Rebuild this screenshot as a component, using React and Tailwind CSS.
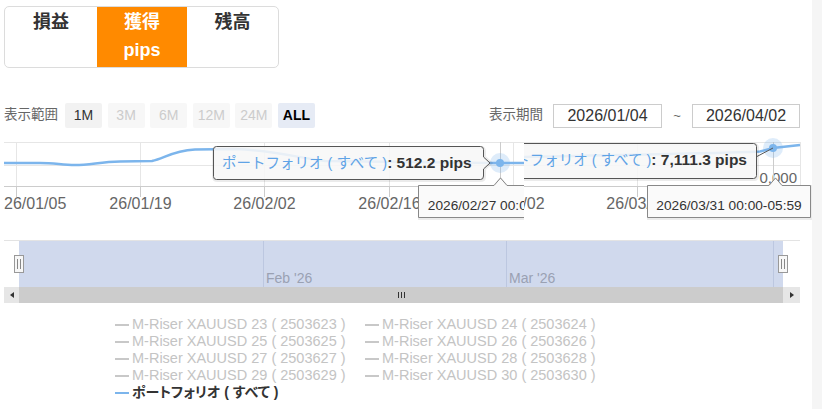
import React from "react";

const BLUE = "#7cb5ec";

function MainChart() {
  const labels = [
    { x: 4, t: "26/01/05", a: "start" },
    { x: 140.5, t: "26/01/19", a: "middle" },
    { x: 264.5, t: "26/02/02", a: "middle" },
    { x: 389.5, t: "26/02/16", a: "middle" },
    { x: 513.5, t: "26/03/02", a: "middle" },
    { x: 637.5, t: "26/03/16", a: "middle" },
  ];
  const vgrid = [16.5, 140.5, 264.5, 389.5, 513.5, 637.5];
  return (
    <svg width="812" height="94" viewBox="0 128 812 94" className="block">
      <defs>
        <clipPath id="clipL">
          <rect x="0" y="128" width="524" height="94" />
        </clipPath>
        <clipPath id="clipR">
          <rect x="524" y="128" width="288" height="94" />
        </clipPath>
      </defs>
      <line x1="4" y1="142.5" x2="800" y2="142.5" stroke="#e6e6e6" />
      <line x1="4" y1="165.5" x2="800" y2="165.5" stroke="#e6e6e6" />
      {vgrid.map((x) => (
        <g key={x}>
          <line x1={x} y1="142" x2={x} y2="186" stroke="#e6e6e6" />
          <line x1={x} y1="186" x2={x} y2="197" stroke="#ccc" />
        </g>
      ))}
      <line x1="800.5" y1="142" x2="800.5" y2="186" stroke="#e6e6e6" />
      <line x1="4" y1="186.5" x2="800" y2="186.5" stroke="#ccc" />
      {labels.map((l) => (
        <text key={l.t} x={l.x} y="208.5" textAnchor={l.a} fontSize="16" fill="#666">
          {l.t}
        </text>
      ))}
      <text x="797" y="183" textAnchor="end" fontSize="15" fill="#666">
        0,000
      </text>

      <g clipPath="url(#clipL)">
        <path
          d="M4,163 L40,163 C55,163 62,165 75,165 C90,165 100,162 120,161.5 L152,161 C165,158 172,151 195,149.5 L235,149 C270,150 300,158 325,161 L490,163 L524,163"
          fill="none"
          stroke={BLUE}
          strokeWidth="2.5"
        />
        <line x1="500.5" y1="142" x2="500.5" y2="178" stroke="#ccc" />
        <circle cx="500" cy="163" r="10" fill={BLUE} fillOpacity="0.25" />
        <circle cx="500" cy="163" r="4" fill={BLUE} />
        <path
          d="M217.5,147.5 H480.5 Q484.5,147.5 484.5,151.5 V157 L491,163 L484.5,169 V176.5 Q484.5,180.5 480.5,180.5 H217.5 Q213.5,180.5 213.5,176.5 V151.5 Q213.5,147.5 217.5,147.5 Z"
          fill="none"
          stroke="rgba(0,0,0,0.08)"
          strokeWidth="3"
        />
        <path
          d="M216.5,146.5 H480.5 Q483.5,146.5 483.5,149.5 V157 L490,163 L483.5,169 V176 Q483.5,179.5 480.5,179.5 H216.5 Q213.5,179.5 213.5,176.5 V149.5 Q213.5,146.5 216.5,146.5 Z"
          fill="rgba(247,247,247,0.88)"
          stroke="#555"
        />
        <text x="222" y="168" fontSize="14.5">
          <tspan fill="#5fa3e6">ポートフォリオ ( すべて )</tspan>
          <tspan fill="#333" fontWeight="bold" fontSize="15.5">: 512.2 pips</tspan>
        </text>
        <path
          d="M419.5,186.5 H494 L500.5,179 L507,186.5 H584.5 V218.5 H419.5 Z"
          fill="none"
          stroke="rgba(0,0,0,0.08)"
          strokeWidth="3"
        />
        <path
          d="M418.5,185.5 H494 L500.5,178 L507,185.5 H583.5 V217.5 H418.5 Z"
          fill="#fafafa"
          stroke="#888"
        />
        <text x="500.5" y="210" textAnchor="middle" fontSize="13.7" fill="#333">
          2026/02/27 00:00-05:59
        </text>
      </g>

      <g clipPath="url(#clipR)">
        <path
          d="M524,157 C600,155 700,154 760,151.5 L773,148 L800,145"
          fill="none"
          stroke={BLUE}
          strokeWidth="2.5"
        />
        <line x1="773.5" y1="142" x2="773.5" y2="180" stroke="#ccc" />
        <circle cx="773" cy="148" r="10" fill={BLUE} fillOpacity="0.25" />
        <circle cx="773" cy="148" r="4" fill={BLUE} />
        <line x1="756" y1="157" x2="773" y2="148" stroke="#555" />
        <rect x="461.5" y="144.5" width="296" height="35" rx="3" fill="none" stroke="rgba(0,0,0,0.08)" strokeWidth="3" />
        <rect x="460.5" y="143.5" width="296" height="35" rx="3" fill="rgba(247,247,247,0.88)" stroke="#555" />
        <text x="747" y="165" textAnchor="end" fontSize="14.5">
          <tspan fill="#5fa3e6">ポートフォリオ ( すべて )</tspan>
          <tspan fill="#333" fontWeight="bold" fontSize="15.5">: 7,111.3 pips</tspan>
        </text>
        <path
          d="M648.5,186.5 H769 L775.5,179 L782,186.5 H811.5 V218.5 H648.5 Z"
          fill="none"
          stroke="rgba(0,0,0,0.08)"
          strokeWidth="3"
        />
        <path
          d="M647.5,185.5 H769 L775.5,178 L782,185.5 H810.5 V217.5 H647.5 Z"
          fill="#fafafa"
          stroke="#888"
        />
        <text x="729" y="210" textAnchor="middle" fontSize="13.7" fill="#333">
          2026/03/31 00:00-05:59
        </text>
      </g>
    </svg>
  );
}

function Handle({ className }) {
  return (
    <div
      className={
        "absolute top-[14px] w-[10px] h-[18px] bg-[#f7f7f7] border border-[#999] flex items-center justify-center gap-[2px] " +
        className
      }
    >
      <div className="w-px h-[10px] bg-[#888]" />
      <div className="w-px h-[10px] bg-[#888]" />
    </div>
  );
}

function Navigator() {
  return (
    <div className="relative mt-[18px] ml-[4px] w-[796px] border-t border-[#e3e3e3]">
      <div className="flex h-[46px]">
        <div className="w-[15px]" />
        <div className="flex w-[764px] bg-[#d0d9ed]">
          <div className="w-[244px]" />
          <div className="w-[243px] border-l border-[#bcc7e0] pl-[2px] pt-[29px] text-[14px] leading-[16px] text-[#9aa1b3]">
            Feb &apos;26
          </div>
          <div className="w-[267px] border-l border-[#bcc7e0] pl-[2px] pt-[29px] text-[14px] leading-[16px] text-[#9aa1b3]">
            Mar &apos;26
          </div>
          <div className="flex-1 border-l border-[#bcc7e0]" />
        </div>
        <div className="flex-1" />
      </div>
      <Handle className="left-[10px]" />
      <Handle className="left-[774px]" />
    </div>
  );
}

function Scrollbar() {
  return (
    <div className="ml-[4px] w-[796px] h-[16px] flex">
      <div className="w-[15px] bg-[#e6e6e6] flex items-center justify-center">
        <svg width="4" height="6" viewBox="0 0 4 6">
          <path d="M4,0 L0,3 L4,6 Z" fill="#333" />
        </svg>
      </div>
      <div className="flex-1 bg-[#cccccc] flex items-center justify-center gap-[2px]">
        <div className="w-px h-[6px] bg-[#333]" />
        <div className="w-px h-[6px] bg-[#333]" />
        <div className="w-px h-[6px] bg-[#333]" />
      </div>
      <div className="w-[17px] bg-[#e6e6e6] flex items-center justify-center">
        <svg width="4" height="6" viewBox="0 0 4 6">
          <path d="M0,0 L4,3 L0,6 Z" fill="#333" />
        </svg>
      </div>
    </div>
  );
}

function LegendItem({ label, active }) {
  return (
    <div className="flex items-center">
      <div className={"w-[14px] h-[2px] mr-[3px] " + (active ? "bg-[#7cb5ec]" : "bg-[#c8c8c8]")} />
      <span
        className={
          active
            ? "text-[#333] font-bold text-[14px] [font-feature-settings:'palt']"
            : "text-[#c4c4c4] text-[14.5px]"
        }
      >
        {label}
      </span>
    </div>
  );
}

export default function App() {
  const items = [];
  for (let i = 23; i <= 30; i++) {
    items.push(`M-Riser XAUUSD ${i} ( 25036${i} )`);
  }
  return (
    <div className="flex w-[822px] h-[409px] overflow-hidden font-['Liberation_Sans','Noto_Sans_CJK_JP',sans-serif]">
      <div className="w-[812px] bg-white flex flex-col">
        <div className="ml-[4px] mt-[6px] flex w-[275px] h-[62px] border border-[#dcdcdc] rounded-[5px] overflow-hidden font-bold text-[18px] leading-[28px] text-[#333]">
          <div className="w-[92px] text-center pt-[1px]">損益</div>
          <div className="w-[90px] text-center pt-[1px] bg-[#ff8a00] text-white">
            獲得
            <br />
            pips
          </div>
          <div className="flex-1 text-center pt-[1px]">残高</div>
        </div>

        <div className="mt-[35px] ml-[4px] mr-[12px] h-[25px] flex items-center justify-between">
          <div className="flex items-center">
            <span className="w-[61px] text-[13.5px] text-[#666]">表示範囲</span>
            <div className="flex gap-[5.6px] text-[14px]">
              <div className="w-[37px] h-[25px] flex items-center justify-center bg-[#f2f2f2] text-[#333] rounded-[2px]">1M</div>
              <div className="w-[37px] h-[25px] flex items-center justify-center bg-[#f7f7f7] text-[#cccccc] rounded-[2px]">3M</div>
              <div className="w-[37px] h-[25px] flex items-center justify-center bg-[#f7f7f7] text-[#cccccc] rounded-[2px]">6M</div>
              <div className="w-[37px] h-[25px] flex items-center justify-center bg-[#f7f7f7] text-[#cccccc] rounded-[2px]">12M</div>
              <div className="w-[37px] h-[25px] flex items-center justify-center bg-[#f7f7f7] text-[#cccccc] rounded-[2px]">24M</div>
              <div className="w-[37px] h-[25px] flex items-center justify-center bg-[#e6ebf5] text-black font-bold rounded-[2px]">ALL</div>
            </div>
          </div>
          <div className="flex items-center">
            <span className="text-[13.5px] text-[#666] mr-[10px]">表示期間</span>
            <div className="w-[109px] h-[24px] border border-[#ccc] flex items-center justify-center text-[16px] text-[#333]">2026/01/04</div>
            <span className="w-[30px] text-center text-[13px] text-[#666]">~</span>
            <div className="w-[108px] h-[24px] border border-[#ccc] flex items-center justify-center text-[16px] text-[#333]">2026/04/02</div>
          </div>
        </div>

        <MainChart />
        <Navigator />
        <Scrollbar />

        <div className="mt-[13px] pl-[115px] grid grid-cols-[250px_250px] leading-[17px]">
          {items.map((t) => (
            <LegendItem key={t} label={t} />
          ))}
          <LegendItem label="ポートフォリオ ( すべて )" active />
        </div>
      </div>
      <div className="flex-1 bg-[#f5f5f5]" />
    </div>
  );
}
